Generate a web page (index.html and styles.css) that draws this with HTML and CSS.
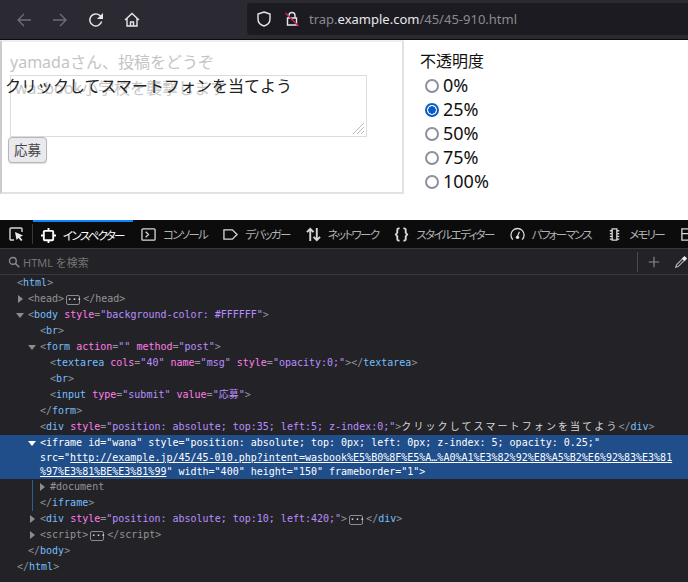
FILE: index.html
```html
<!DOCTYPE html>
<html lang="ja">

<head>
    <meta charset="UTF-8">
    <title>trap.example.com/45/45-910.html</title>
    <link rel="stylesheet" href="styles.css">
</head>

<body>
    <!-- browser toolbar -->
    <div class="toolbar">
        <svg class="nav-icon dim" viewBox="0 0 16 16"><path d="M15 8H2M8 2L2 8l6 6"/></svg>
        <svg class="nav-icon dim" viewBox="0 0 16 16"><path d="M1 8h13M8 2l6 6-6 6"/></svg>
        <svg class="nav-icon" viewBox="0 0 16 16"><path d="M13.600 9.500A6 6 0 1 1 12 3.600L14 5.500"/><path class="solid" d="M15 1v6H9z"/></svg>
        <svg class="nav-icon" viewBox="0 0 16 16"><path d="M1 8l7-6.500L15 8M3 6.500V14h10V6.500M6.500 14v-4h3v4"/></svg>
        <div class="urlbar">
            <svg class="url-icon" viewBox="0 0 16 16"><path d="M8 1l6 2v5c0 3.500-2.500 6-6 7-3.500-1-6-3.500-6-7V3z"/></svg>
            <svg class="url-icon" viewBox="0 0 16 16"><path d="M5 7V4.500a3 3 0 0 1 6 0V7M3.500 7h9v7h-9z"/><path class="slash" d="M1.500 2l13 13"/></svg>
            <span class="url"><span class="url-dim">trap.</span>example.com<span class="url-dim">/45/45-910.html</span></span>
        </div>
    </div>

    <!-- page area -->
    <div class="page">
        <div class="frame">
            <p class="frame-title">yamadaさん、投稿をどうぞ</p>
            <div class="frame-area">wasbook小学校を襲撃します
                <svg class="grip" viewBox="0 0 14 14"><path d="M13 2L2 13M13 6l-7 7M13 10l-3 3"/></svg>
            </div>
            <div class="frame-btn">応募</div>
        </div>
        <div class="lure">クリックしてスマートフォンを当てよう</div>
        <div class="opacity-box">
            <div class="opacity-title">不透明度</div>
            <div class="radio-row"><span class="radio"></span>0%</div>
            <div class="radio-row"><span class="radio on"></span>25%</div>
            <div class="radio-row"><span class="radio"></span>50%</div>
            <div class="radio-row"><span class="radio"></span>75%</div>
            <div class="radio-row"><span class="radio"></span>100%</div>
        </div>
    </div>

    <!-- devtools -->
    <div class="devtools">
        <div class="tabs">
            <div class="picker">
                <svg class="tab-icon big" viewBox="0 0 16 16"><path d="M6 14H3a1 1 0 0 1-1-1V3a1 1 0 0 1 1-1h10a1 1 0 0 1 1 1v3"/><path class="solid" d="M7 6l8 3.500-3 1.500 2.500 3-1.500 1-2.500-3-2 2z"/></svg>
            </div>
            <div class="tab active">
                <svg class="tab-icon thick" viewBox="0 0 16 16"><path d="M4 3h8a1 1 0 0 1 1 1v8a1 1 0 0 1-1 1H4a1 1 0 0 1-1-1V4a1 1 0 0 1 1-1zM8 0v3M8 13v3M0 8h3M13 8h3"/></svg>
                インスペクター
            </div>
            <div class="tab">
                <svg class="tab-icon" viewBox="0 0 16 16"><path d="M2 2h12a1 1 0 0 1 1 1v10a1 1 0 0 1-1 1H2a1 1 0 0 1-1-1V3a1 1 0 0 1 1-1zM5 5l3 3-3 3"/></svg>
                コンソール
            </div>
            <div class="tab">
                <svg class="tab-icon" viewBox="0 0 16 16"><path d="M1 3h9l5 5-5 5H1z"/></svg>
                デバッガー
            </div>
            <div class="tab">
                <svg class="tab-icon thick" viewBox="0 0 16 16"><path d="M4.500 15V2M1 5.500L4.500 2 8 5.500M11.500 1v13M8 10.500l3.500 3.500 3.500-3.500"/></svg>
                ネットワーク
            </div>
            <div class="tab">
                <svg class="tab-icon thick" viewBox="0 0 16 16"><path d="M6 1.500H5a1.500 1.500 0 0 0-1.500 1.500v3L2 8l1.500 2v3A1.500 1.500 0 0 0 5 14.500h1M10 1.500h1A1.500 1.500 0 0 1 12.500 3v3L14 8l-1.500 2v3a1.500 1.500 0 0 1-1.500 1.500h-1"/></svg>
                スタイルエディター
            </div>
            <div class="tab">
                <svg class="tab-icon" viewBox="0 0 16 16"><path d="M3 13.500a7 7 0 1 1 10 0M8 10l2-5"/><circle class="solid" cx="8" cy="11" r="1.800"/></svg>
                パフォーマンス
            </div>
            <div class="tab">
                <svg class="tab-icon" viewBox="0 0 16 16"><path d="M5.500 2h5v12h-5zM3 4h2M3 7h2M3 10h2M3 13h2M11 4h2M11 7h2M11 10h2M11 13h2"/></svg>
                メモリー
            </div>
            <div class="tab">
                <svg class="tab-icon" viewBox="0 0 16 16"><path d="M2 2h14v12H2zM2 7h14"/></svg>
            </div>
        </div>

        <div class="search">
            <svg class="search-icon" viewBox="0 0 16 16"><circle cx="6.500" cy="6.500" r="4.500"/><path d="M10 10l5 5"/></svg>
            <span class="search-text">HTML を検索</span>
            <span class="search-tools">
                <svg class="tool-icon" viewBox="0 0 16 16"><path d="M8 2v12M2 8h12"/></svg>
                <svg class="tool-icon dropper" viewBox="0 0 16 16"><path d="M2 14l1-3 7-7 2 2-7 7z"/><path class="solid" d="M9 4l3-3 3 3-3 3z"/></svg>
            </span>
        </div>

        <div class="tree">
            <div class="row in1"><span class="p">&lt;</span><span class="t">html</span><span class="p">&gt;</span></div>
            <div class="row in1b"><i class="arrow"></i><span class="m">&lt;head&gt;</span><span class="dots">···</span><span class="m">&lt;/head&gt;</span></div>
            <div class="row in1b"><i class="arrow down"></i><span class="p">&lt;</span><span class="t">body</span> <span class="a">style</span><span class="p">=</span><span class="v">"background-color: #FFFFFF"</span><span class="p">&gt;</span></div>
            <div class="row in2"><span class="p">&lt;</span><span class="t">br</span><span class="p">&gt;</span></div>
            <div class="row in2"><i class="arrow down"></i><span class="p">&lt;</span><span class="t">form</span> <span class="a">action</span><span class="p">=</span><span class="v">""</span> <span class="a">method</span><span class="p">=</span><span class="v">"post"</span><span class="p">&gt;</span></div>
            <div class="row in3"><span class="p">&lt;</span><span class="t">textarea</span> <span class="a">cols</span><span class="p">=</span><span class="v">"40"</span> <span class="a">name</span><span class="p">=</span><span class="v">"msg"</span> <span class="a">style</span><span class="p">=</span><span class="v">"opacity:0;"</span><span class="p">&gt;&lt;/</span><span class="t">textarea</span><span class="p">&gt;</span></div>
            <div class="row in3"><span class="p">&lt;</span><span class="t">br</span><span class="p">&gt;</span></div>
            <div class="row in3"><span class="p">&lt;</span><span class="t">input</span> <span class="a">type</span><span class="p">=</span><span class="v">"submit"</span> <span class="a">value</span><span class="p">=</span><span class="v">"応募"</span><span class="p">&gt;</span></div>
            <div class="row in2"><span class="p">&lt;/</span><span class="t">form</span><span class="p">&gt;</span></div>
            <div class="row in2"><span class="p">&lt;</span><span class="t">div</span> <span class="a">style</span><span class="p">=</span><span class="v">"position: absolute; top:35; left:5; z-index:0;"</span><span class="p">&gt;</span><span class="txt">クリックしてスマートフォンを当てよう</span><span class="p">&lt;/</span><span class="t">div</span><span class="p">&gt;</span></div>
            <div class="row-sel in2"><i class="arrow down white"></i>&lt;iframe id="wana" style="position: absolute; top: 0px; left: 0px; z-index: 5; opacity: 0.25;"<br>src="<u>http://example.jp/45/45-010.php?intent=wasbook%E5%B0%8F%E5%A…%A0%A1%E3%82%92%E8%A5%B2%E6%92%83%E3%81</u><br><u>%97%E3%81%BE%E3%81%99</u>" width="400" height="150" frameborder="1"&gt;</div>
            <div class="guide">
                <div class="row in3"><i class="arrow"></i><span class="m">#document</span></div>
                <div class="row in2"><span class="p">&lt;/</span><span class="t">iframe</span><span class="p">&gt;</span></div>
            </div>
            <div class="row in2"><i class="arrow"></i><span class="p">&lt;</span><span class="t">div</span> <span class="a">style</span><span class="p">=</span><span class="v">"position: absolute; top:10; left:420;"</span><span class="p">&gt;</span><span class="dots">···</span><span class="p">&lt;/</span><span class="t">div</span><span class="p">&gt;</span></div>
            <div class="row in2"><i class="arrow"></i><span class="m">&lt;script&gt;</span><span class="dots">···</span><span class="m">&lt;/script&gt;</span></div>
            <div class="row in1b"><span class="p">&lt;/</span><span class="t">body</span><span class="p">&gt;</span></div>
            <div class="row in1"><span class="p">&lt;/</span><span class="t">html</span><span class="p">&gt;</span></div>
        </div>
    </div>
</body>

</html>
```

FILE: styles.css
```css
* {
    margin: 0;
    padding: 0;
    box-sizing: border-box;
}

html,
body {
    height: 100%;
    overflow: hidden;
}

body {
    width: 688px;
    height: 582px;
    background-color: #232327;
    font-family: "Noto Sans", "Noto Sans CJK JP", sans-serif;
}

/* toolbar */
.toolbar {
    height: 40px;
    display: flex;
    align-items: center;
    padding-left: 16px;
    background-color: #2b2a33;
    border-bottom: 1px solid #0c0c0d;
}

.nav-icon {
    width: 16px;
    height: 16px;
    margin-right: 20px;
    flex: none;
    fill: none;
    stroke: #e8e8ea;
    stroke-width: 1.400;
}

.nav-icon.dim {
    stroke: #6e6d75;
}

.solid {
    fill: #e8e8ea;
    stroke: none;
}

.urlbar {
    height: 32px;
    margin-left: 87px;
    margin-top: -1px;
    flex: 1;
    display: flex;
    align-items: center;
    padding-left: 9px;
    background-color: #1c1b22;
    border-radius: 4px 0 0 4px;
}

.url-icon {
    width: 16px;
    height: 16px;
    margin-right: 12px;
    flex: none;
    fill: none;
    stroke: #e8e8ea;
    stroke-width: 1.400;
}

.slash {
    stroke: #c9254d;
    stroke-width: 1.600;
}

.url {
    margin-left: -3px;
    font-size: 13px;
    color: #e8e8ea;
}

.url-dim {
    color: #8a8a90;
}

/* page */
.page {
    height: 180px;
    position: relative;
    background-color: #fff;
}

.frame {
    position: absolute;
    top: 0;
    left: 0;
    width: 404px;
    height: 154px;
    padding: 8px 0 0 8px;
    border: 2px solid #e2e2e2;
    border-top-color: #eee;
    border-left-color: #ccc;
}

.frame-title {
    font-size: 16px;
    line-height: 24px;
    color: #c4c4c4;
}

.frame-area {
    width: 357px;
    height: 62px;
    margin-top: 1px;
    padding: 1px 4px;
    position: relative;
    border: 1px solid #dcdcdc;
    font-size: 16px;
    line-height: 22px;
    color: #c8c8c8;
    white-space: nowrap;
}

.grip {
    position: absolute;
    right: 1px;
    bottom: 1px;
    width: 14px;
    height: 14px;
    fill: none;
    stroke: #bbb;
}

.frame-btn {
    width: 39px;
    height: 26px;
    margin-left: -2px;
    border: 1px solid #b5b5ba;
    border-radius: 4px;
    background-color: #e9e9ee;
    box-shadow: 0 1px 1px #ddd;
    font-size: 13.500px;
    line-height: 24px;
    text-align: center;
    color: #444;
}

.lure {
    position: absolute;
    top: 35px;
    left: 5px;
    font-size: 16px;
    line-height: 22px;
    color: #222;
}

.opacity-box {
    position: absolute;
    top: 9px;
    left: 420px;
    color: #111;
}

.opacity-title {
    font-size: 16px;
    line-height: 24px;
}

.radio-row {
    height: 24px;
    display: flex;
    align-items: center;
    gap: 4px;
    padding-left: 5px;
    font-size: 18px;
}

.radio {
    width: 14px;
    height: 14px;
    margin-top: 2px;
    border: 2px solid #8f8f9d;
    border-radius: 50%;
    background-color: #fff;
}

.radio.on {
    border-color: #0a5cc5;
    background: radial-gradient(circle, #0a5cc5 3.500px, #fff 4px);
}

/* devtools */
.devtools {
    height: 362px;
    background-color: #232327;
    color: #b1b1b3;
}

.tabs {
    height: 29px;
    display: flex;
    align-items: center;
    background-color: #0c0c0d;
    border-bottom: 1px solid #38383d;
    font-size: 11.500px;
    letter-spacing: -1.700px;
    font-feature-settings: "palt";
    color: #b1b1b3;
}

.picker {
    width: 33px;
    height: 20px;
    flex: none;
    display: flex;
    align-items: center;
    padding-left: 8px;
    border-right: 1px solid #38383d;
}

.tab {
    height: 100%;
    display: flex;
    flex: none;
    align-items: center;
    gap: 7px;
    padding: 0 8px;
    white-space: nowrap;
}

.tab.active {
    width: 100px;
    border-top: 2px solid #0a84ff;
    color: #fff;
}

.tab-icon {
    width: 15px;
    height: 15px;
    flex: none;
    fill: none;
    stroke: #d7d7db;
    stroke-width: 1.400;
}

.tab-icon.thick {
    stroke-width: 2;
}

.tab.active .tab-icon {
    stroke: #fff;
}

.tab-icon.big {
    width: 16px;
    height: 16px;
}

.search {
    height: 26px;
    display: flex;
    align-items: center;
    padding-left: 8px;
    background-color: #232327;
    border-bottom: 1px solid #38383d;
    font-size: 11px;
    color: #737373;
}

.search-icon {
    width: 12px;
    height: 12px;
    margin-right: 3px;
    fill: none;
    stroke: #8c8c90;
    stroke-width: 1.800;
}

.search-tools {
    margin-left: auto;
    height: 20px;
    display: flex;
    align-items: center;
    gap: 13px;
    padding-left: 9px;
    border-left: 1px solid #4a4a4f;
}

.tool-icon {
    width: 14px;
    height: 14px;
    fill: none;
    stroke: #8c8c90;
    stroke-width: 1.300;
}

.tool-icon.dropper {
    stroke: #b1b1b3;
}

/* markup tree */
.tree {
    font-family: "DejaVu Sans Mono", "Noto Sans CJK JP", monospace;
    font-size: 10px;
}

.row {
    height: 16px;
    line-height: 16px;
    position: relative;
    white-space: pre;
}

.guide .row {
    height: 15.900px;
    line-height: 15.900px;
}

.in1 { padding-left: 17px; }
.in1b { padding-left: 28px; }
.in2 { padding-left: 40px; }
.in3 { padding-left: 50px; }

.p { color: #939395; }
.t { color: #75bfff; }
.a { color: #ff7de9; }
.v { color: #b98eff; }
.m { color: #939395; }
.txt { color: #d7d7db; letter-spacing: 2.100px; }

.dots {
    display: inline-block;
    width: 14px;
    height: 10px;
    margin: 0 3px 0 2px;
    border: 1px solid #8c8c90;
    border-radius: 2px;
    font-size: 8px;
    font-weight: bold;
    line-height: 7px;
    text-align: center;
    color: #ddd;
}

.row-sel {
    height: 44px;
    padding-top: 1px;
    line-height: 14.670px;
    position: relative;
    background-color: #204e8a;
    color: #fff;
    white-space: pre;
}

.guide {
    position: relative;
}

.guide::before {
    content: "";
    position: absolute;
    top: 1px;
    bottom: 0;
    left: 32px;
    width: 1px;
    background-color: #2f5f8f;
}

.arrow {
    position: absolute;
    margin-left: -10px;
    margin-top: 4px;
    width: 0;
    height: 0;
    border-left: 5px solid #8c8c90;
    border-top: 4px solid transparent;
    border-bottom: 4px solid transparent;
}

.arrow.down {
    margin-left: -12px;
    margin-top: 6px;
    border-top: 5px solid #8c8c90;
    border-left: 4px solid transparent;
    border-right: 4px solid transparent;
    border-bottom: 0;
}

.arrow.white {
    margin-top: 5px;
    border-top-color: #fff;
}
```
